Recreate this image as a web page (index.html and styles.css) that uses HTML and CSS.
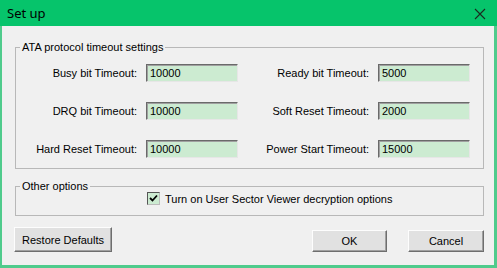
FILE: index.html
```html
<!DOCTYPE html>
<html lang="en">

<head>
    <meta charset="UTF-8">
    <title>Set up</title>
    <link rel="stylesheet" href="styles.css">
</head>

<body>
    <div class="window">
        <!-- Title bar -->
        <div class="titlebar">
            <span class="title">Set up</span>
            <svg class="close" width="12" height="12" viewBox="0 0 12 12">
                <path d="M1 1 L11 11 M11 1 L1 11" stroke="#1b2a20" stroke-width="1.1" fill="none"/>
            </svg>
        </div>

        <div class="content">
            <fieldset class="group timeouts">
                <legend>ATA protocol timeout settings</legend>
                <label>Busy bit Timeout:</label>
                <input class="field" type="text" value="10000">
                <label>Ready bit Timeout:</label>
                <input class="field" type="text" value="5000">

                <label>DRQ bit Timeout:</label>
                <input class="field" type="text" value="10000">
                <label>Soft Reset Timeout:</label>
                <input class="field" type="text" value="2000">

                <label>Hard Reset Timeout:</label>
                <input class="field" type="text" value="10000">
                <label>Power Start Timeout:</label>
                <input class="field" type="text" value="15000">
            </fieldset>

            <fieldset class="group options">
                <legend>Other options</legend>
                <label class="check">
                    <span class="box">
                        <svg width="9" height="9" viewBox="0 0 9 9">
                            <path d="M1 4 L3.5 6.5 L8 1.5" stroke="#000" stroke-width="1.8" fill="none"/>
                        </svg>
                    </span>
                    Turn on User Sector Viewer decryption options
                </label>
            </fieldset>

            <div class="buttons">
                <button class="btn restore">Restore Defaults</button>
                <button class="btn ok">OK</button>
                <button class="btn cancel">Cancel</button>
            </div>
        </div>
    </div>
</body>

</html>
```

FILE: styles.css
```css
body {
    margin: 0;
    padding: 0;
    font-family: 'Liberation Sans', Arial, sans-serif;
    font-size: 11px;
    color: #000;
    background-color: #f0f0f0;
}

.window {
    width: 497px;
    height: 268px;
    box-sizing: border-box;
    background-color: #f0f0f0;
    border-left: 2px solid #4fcb8c;
    border-right: 3px solid #4fcb8c;
    border-bottom: 3px solid #4fcb8c;
    display: flex;
    flex-direction: column;
}

/* Title bar */
.titlebar {
    height: 26px;
    margin: 0 -3px 0 -2px;
    background-color: #06c46b;
    display: flex;
    align-items: center;
    justify-content: space-between;
    padding: 0 11px 0 7px;
}

.title {
    font-family: 'Noto Sans', sans-serif;
    font-size: 13px;
    line-height: 26px;
}

.close {
    margin-top: 1px;
}

.content {
    padding: 14px 10px 0 13px;
}

/* Group boxes */
.group {
    margin: 0;
    padding: 0;
    border: 1px solid #b8b8b8;
    min-inline-size: 0;
}

.group legend {
    margin-left: 4px;
    padding: 0 2px;
    line-height: 15px;
}

.timeouts {
    display: grid;
    grid-template-columns: 130px 92px 140px 92px;
    row-gap: 20px;
    align-items: center;
    padding: 9px 0 10px;
}

.timeouts label {
    text-align: right;
    padding-right: 9px;
}

.field {
    box-sizing: border-box;
    width: 92px;
    height: 18px;
    margin: 0;
    padding: 0 3px;
    font-family: inherit;
    font-size: 11px;
    background-color: #ccebd1;
    border: 1px solid;
    border-color: #6a6a6a #e6e6e6 #e6e6e6 #6a6a6a;
    box-shadow: inset 1px 1px 0 #a0a0a0;
    outline: none;
}

.options {
    margin-top: 10px;
    padding: 0 0 10px;
}

.check {
    display: flex;
    align-items: center;
    gap: 5px;
    margin: -2px 0 0 131px;
}

.box {
    box-sizing: border-box;
    width: 13px;
    height: 13px;
    background-color: #ccebd1;
    border: 1px solid;
    border-color: #555 #bbb #bbb #555;
    display: flex;
    align-items: center;
    justify-content: center;
}

/* Buttons */
.buttons {
    display: flex;
    align-items: flex-end;
    margin-top: 11px;
}

.btn {
    box-sizing: border-box;
    font-family: inherit;
    font-size: 11px;
    color: #000;
    background-color: #e1e1e1;
    border: 1px solid;
    border-color: #fdfdfd #6e6e6e #6e6e6e #fdfdfd;
    box-shadow: inset -1px -1px 0 #a0a0a0;
    padding: 0;
    cursor: pointer;
}

.btn.restore {
    width: 98px;
    height: 25px;
    margin-left: -1px;
}

.btn.ok {
    width: 75px;
    height: 22px;
    margin-left: auto;
}

.btn.cancel {
    width: 76px;
    height: 22px;
    margin-left: 21px;
}
```
